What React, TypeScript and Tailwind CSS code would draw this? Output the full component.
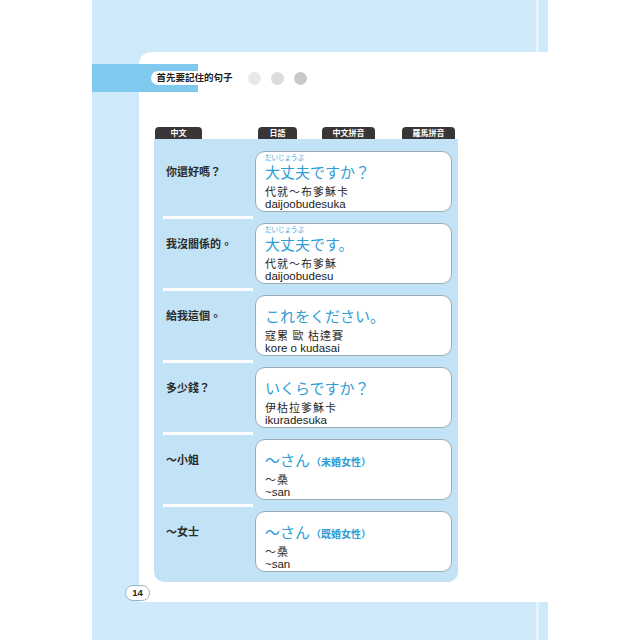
import React from 'react';

interface Row {
  label: string;
  furigana?: string;
  main: string;
  note?: string;
  pron: string;
  romaji: string;
}

const rows: Row[] = [
  { label: '你還好嗎？', furigana: 'だいじょうぶ', main: '大丈夫ですか？', pron: '代就～布爹穌卡', romaji: 'daijoobudesuka' },
  { label: '我沒關係的。', furigana: 'だいじょうぶ', main: '大丈夫です。', pron: '代就～布爹穌', romaji: 'daijoobudesu' },
  { label: '給我這個。', main: 'これをください。', pron: '寇累 歐 枯達賽', romaji: 'kore o kudasai' },
  { label: '多少錢？', main: 'いくらですか？', pron: '伊枯拉爹穌卡', romaji: 'ikuradesuka' },
  { label: '～小姐', main: '～さん', note: '（未婚女性）', pron: '～桑', romaji: '~san' },
  { label: '～女士', main: '～さん', note: '（既婚女性）', pron: '～桑', romaji: '~san' },
];

// tabs above the table: left offset (px from previous tab) and width
const tabs = [
  { text: '中文', w: 'w-[47px]', ml: 'ml-[1px]' },
  { text: '日語', w: 'w-[39px]', ml: 'ml-[56px]' },
  { text: '中文拼音', w: 'w-[53px]', ml: 'ml-[25px]' },
  { text: '羅馬拼音', w: 'w-[53px]', ml: 'ml-[27px]' },
];

function PhraseCard({ row }: { row: Row }) {
  return (
    <div className="w-[197px] h-[61px] bg-white border border-[#9fabb3] rounded-[10px] pl-[9px] pt-[1px] flex flex-col overflow-hidden">
      <div className="h-[8px] leading-[8px] text-[6.5px] text-[#2f9dd6] font-['Noto_Sans_CJK_JP',sans-serif]">
        {row.furigana ?? ''}
      </div>
      <div className="h-[21px] leading-[21px] text-[15px] text-[#2f9dd6] font-['Noto_Sans_CJK_JP',sans-serif] flex items-baseline">
        <span>{row.main}</span>
        {row.note && <span className="text-[10px] font-bold ml-[1px]">{row.note}</span>}
      </div>
      <div className="mt-[2px] h-[14px] leading-[14px] text-[11px] text-[#2a2a2a] tracking-[1px] font-['Noto_Sans_CJK_TC',serif]">
        {row.pron}
      </div>
      <div className="h-[13px] leading-[13px] text-[11.5px] text-[#222] font-['Liberation_Sans',Arial,sans-serif]">
        {row.romaji}
      </div>
    </div>
  );
}

export default function App() {
  return (
    <div className="w-[640px] h-[640px] bg-white overflow-hidden font-['Noto_Sans_CJK_TC','Noto_Sans_CJK_JP',sans-serif]">
      <div className="ml-[92px] w-[456px] h-full bg-[#cee9f9] flex flex-col">
        {/* top band */}
        <div className="h-[52px] flex">
          <div className="w-[444px]" />
          <div className="w-[3px] bg-[#e4f3fc]" />
        </div>

        <div className="h-[550px] flex">
          {/* left strip */}
          <div className="w-[47px]" />

          {/* page */}
          <div className="flex-1 bg-white rounded-tl-[12px] flex flex-col">
            <div className="h-[12px]" />

            {/* title */}
            <div className="h-[28px] -ml-[47px] flex items-center">
              <div className="w-[106px] h-[28px] bg-[#7fc9ef]" />
              <div className="-ml-[47px] w-[87px] h-[14px] bg-white rounded-full flex items-center justify-center text-[9.5px] font-bold text-[#222] leading-none">
                首先要記住的句子
              </div>
              <div className="ml-[10px] w-[13px] h-[13px] rounded-full bg-[#e8e8e8]" />
              <div className="ml-[10px] w-[13px] h-[13px] rounded-full bg-[#dcdcdc]" />
              <div className="ml-[10px] w-[13px] h-[13px] rounded-full bg-[#c9c9c9]" />
            </div>

            <div className="h-[35px]" />

            {/* tabs */}
            <div className="ml-[15px] h-[12px] flex">
              {tabs.map((t) => (
                <div
                  key={t.text}
                  className={`${t.w} ${t.ml} h-[12px] bg-[#3a3637] rounded-t-[4px] text-white text-[8px] font-bold leading-[12px] text-center`}
                >
                  {t.text}
                </div>
              ))}
            </div>

            {/* table */}
            <div className="ml-[15px] w-[304px] h-[443px] bg-[#c2e3f6] rounded-b-[10px] pt-[12px] flex flex-col">
              {rows.map((row, i) => (
                <React.Fragment key={i}>
                  {i > 0 && (
                    <div className="h-[11px] flex items-center">
                      <div className="ml-[9px] w-[90px] h-[3px] bg-white" />
                    </div>
                  )}
                  <div className="flex">
                    <div className="w-[101px] pl-[12px] pt-[13px] text-[11px] leading-[14px] font-bold text-[#2b2b2b]">
                      {row.label}
                    </div>
                    <PhraseCard row={row} />
                  </div>
                </React.Fragment>
              ))}
            </div>

            {/* page number */}
            <div className="mt-[3px] -ml-[14px] w-[25px] h-[16px] bg-white border border-[#9fb8c4] rounded-full flex items-center justify-center text-[9.5px] font-bold text-[#222] leading-none font-['Liberation_Sans',Arial,sans-serif]">
              14
            </div>
          </div>
        </div>

        {/* bottom band */}
        <div className="flex-1 flex">
          <div className="w-[444px]" />
          <div className="w-[3px] bg-[#e4f3fc]" />
        </div>
      </div>
    </div>
  );
}
